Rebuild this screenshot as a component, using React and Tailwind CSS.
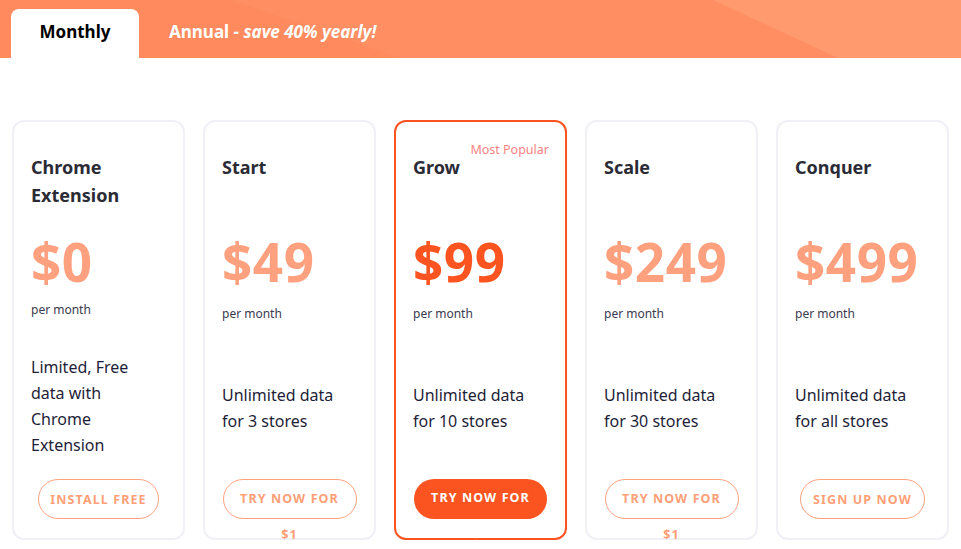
import React from "react";

const plans = [
  {
    name: ["Chrome", "Extension"],
    price: "$0",
    desc: ["Limited, Free", "data with", "Chrome", "Extension"],
    cta: ["INSTALL FREE"],
    btnW: "w-[121px]",
    tight: true,
  },
  {
    name: ["Start"],
    price: "$49",
    desc: ["Unlimited data", "for 3 stores"],
    cta: ["TRY NOW FOR", "$1"],
    btnW: "w-[134px]",
  },
  {
    name: ["Grow"],
    price: "$99",
    desc: ["Unlimited data", "for 10 stores"],
    cta: ["TRY NOW FOR", "$1"],
    btnW: "w-[133px]",
    popular: true,
  },
  {
    name: ["Scale"],
    price: "$249",
    desc: ["Unlimited data", "for 30 stores"],
    cta: ["TRY NOW FOR", "$1"],
    btnW: "w-[134px]",
  },
  {
    name: ["Conquer"],
    price: "$499",
    desc: ["Unlimited data", "for all stores"],
    cta: ["SIGN UP NOW"],
    btnW: "w-[125px]",
  },
];

const PlanCard = ({ plan }) => {
  const hot = plan.popular;
  return (
    <div
      className={`relative flex h-[420px] flex-col rounded-[12px] border-2 bg-white px-[17px] pt-[31px] pb-[19px] ${
        hot ? "border-[#fc5420]" : "border-[#f0f0f6]"
      }`}
    >
      {hot && (
        <span className="absolute top-[19px] right-[16px] text-[12.5px] leading-[18px] text-[#f98383]">
          Most Popular
        </span>
      )}
      <h3 className="h-[56px] text-[18px] font-bold leading-[28px] text-[#2b2b36]">
        {plan.name.map((l) => (
          <div key={l}>{l}</div>
        ))}
      </h3>
      <div
        className={`mt-[23px] text-[53px] font-bold leading-[60px] tracking-[0.5px] ${
          hot ? "text-[#fc5420]" : "text-[#ffa07f]"
        }`}
      >
        {plan.price}
      </div>
      <div
        className={`text-[12px] leading-[18px] text-[#3a3a4e] ${
          plan.tight ? "mt-[9px]" : "mt-[13px]"
        }`}
      >
        per month
      </div>
      <div className="flex flex-1 items-center pt-[13px] text-[16px] leading-[26px] text-[#1e1e38]">
        <div>
          {plan.desc.map((l) => (
            <div key={l}>{l}</div>
          ))}
        </div>
      </div>
      <div className="flex justify-center">
        <button
          type="button"
          className={`${plan.btnW} h-10 rounded-full pt-[1px] text-center text-[12.5px] font-bold leading-[36px] tracking-[1.1px] ${
            hot
              ? "bg-[#fc5420] text-white"
              : "border border-[#ffa27f] text-[#ff9f78]"
          }`}
        >
          {plan.cta.map((l) => (
            <div key={l}>{l}</div>
          ))}
        </button>
      </div>
    </div>
  );
};

export default function App() {
  return (
    <div
      className="min-h-[549px] w-[961px] bg-white"
      style={{ fontFamily: '"Noto Sans", "Open Sans", sans-serif' }}
    >
      <div className="relative h-[58px] overflow-hidden bg-[#ff8a5d]">
        <svg
          className="absolute inset-0"
          width="961"
          height="58"
          viewBox="0 0 961 58"
          preserveAspectRatio="none"
        >
          <polygon points="230,0 961,0 961,58 400,58" fill="#ff8e62" />
          <polygon points="713,0 961,0 961,58 838,58" fill="#ff9a6f" />
        </svg>
        <div className="relative flex h-full items-end pl-[11px]">
          <div className="flex h-[49px] w-[128px] items-center justify-center rounded-t-[8px] bg-white pb-[4px] text-[17px] font-bold text-black">
            Monthly
          </div>
          <div className="ml-[30px] flex h-[49px] items-center pb-[4px] text-[17px] font-bold text-white">
            Annual&nbsp;<i>- save 40% yearly!</i>
          </div>
        </div>
      </div>
      <div className="mt-[62px] grid grid-cols-5 gap-[18px] px-3">
        {plans.map((p) => (
          <PlanCard key={p.price} plan={p} />
        ))}
      </div>
    </div>
  );
}
